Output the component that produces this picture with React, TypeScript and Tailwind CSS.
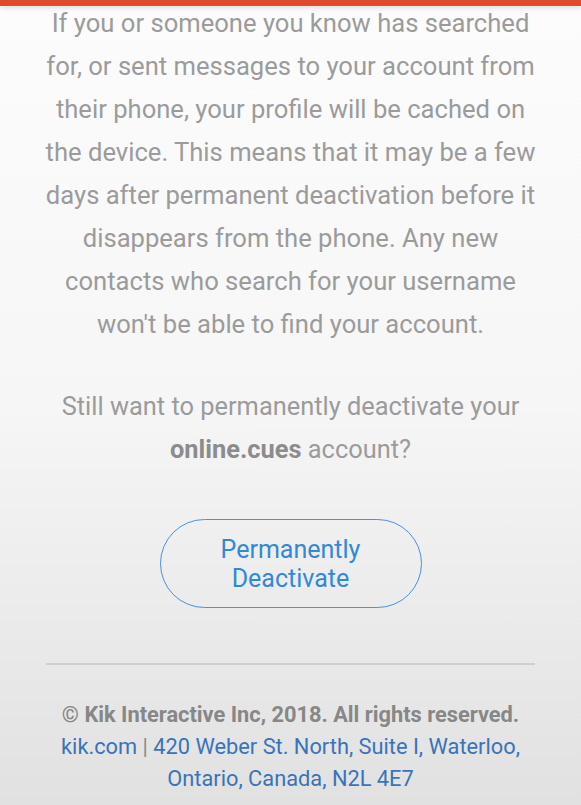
const intro = [
  'If you or someone you know has searched',
  'for, or sent messages to your account from',
  'their phone, your profile will be cached on',
  'the device. This means that it may be a few',
  'days after permanent deactivation before it',
  'disappears from the phone. Any new',
  'contacts who search for your username',
  "won't be able to find your account.",
];

export default function App() {
  return (
    <div
      className="relative h-[805px] w-full overflow-hidden bg-linear-to-b from-[#fcfcfc] via-[#f6f6f6] to-[#e1e1e1] text-center"
      style={{ fontFamily: 'Roboto, "Noto Sans", sans-serif' }}
    >
      <div className="relative z-10 h-[6px] w-full bg-[#e1492d] shadow-[0_2px_5px_rgba(0,0,0,0.12)]" />

      <div className="px-[40px]">
        <p className="-mt-[4px] text-[25.6px] leading-[43px] text-[#9b9b9b]">
          {intro.map((line) => (
            <span key={line} className="block whitespace-nowrap">
              {line}
            </span>
          ))}
        </p>

        <p className="mt-[39px] text-[25.4px] leading-[43px] text-[#9b9b9b]">
          <span className="block whitespace-nowrap">Still want to permanently deactivate your</span>
          <span className="block whitespace-nowrap">
            <span className="font-bold text-[#8c8c8c]">online.cues</span> account?
          </span>
        </p>

        <div className="mt-[48px] flex justify-center">
          <button className="w-[262px] rounded-full border-[1.5px] border-[#4a91d8] py-[14.5px] text-[25px] leading-[29px] text-[#3189d6]">
            Permanently
            <br />
            Deactivate
          </button>
        </div>

        <div className="mx-[6px] mt-[55px] h-[2px] bg-[#cfcfcf]" />

        <div className="mt-[34px] text-[21.8px] leading-[32px]">
          <p className="whitespace-nowrap font-bold text-[#878787]">© Kik Interactive Inc, 2018. All rights reserved.</p>
          <p className="text-[#3a73b9]">
            <span className="block whitespace-nowrap">
              kik.com <span className="text-[#8a8a8a]">|</span> 420 Weber St. North, Suite I, Waterloo,
            </span>
            <span className="block whitespace-nowrap">Ontario, Canada, N2L 4E7</span>
          </p>
        </div>
      </div>
    </div>
  );
}
